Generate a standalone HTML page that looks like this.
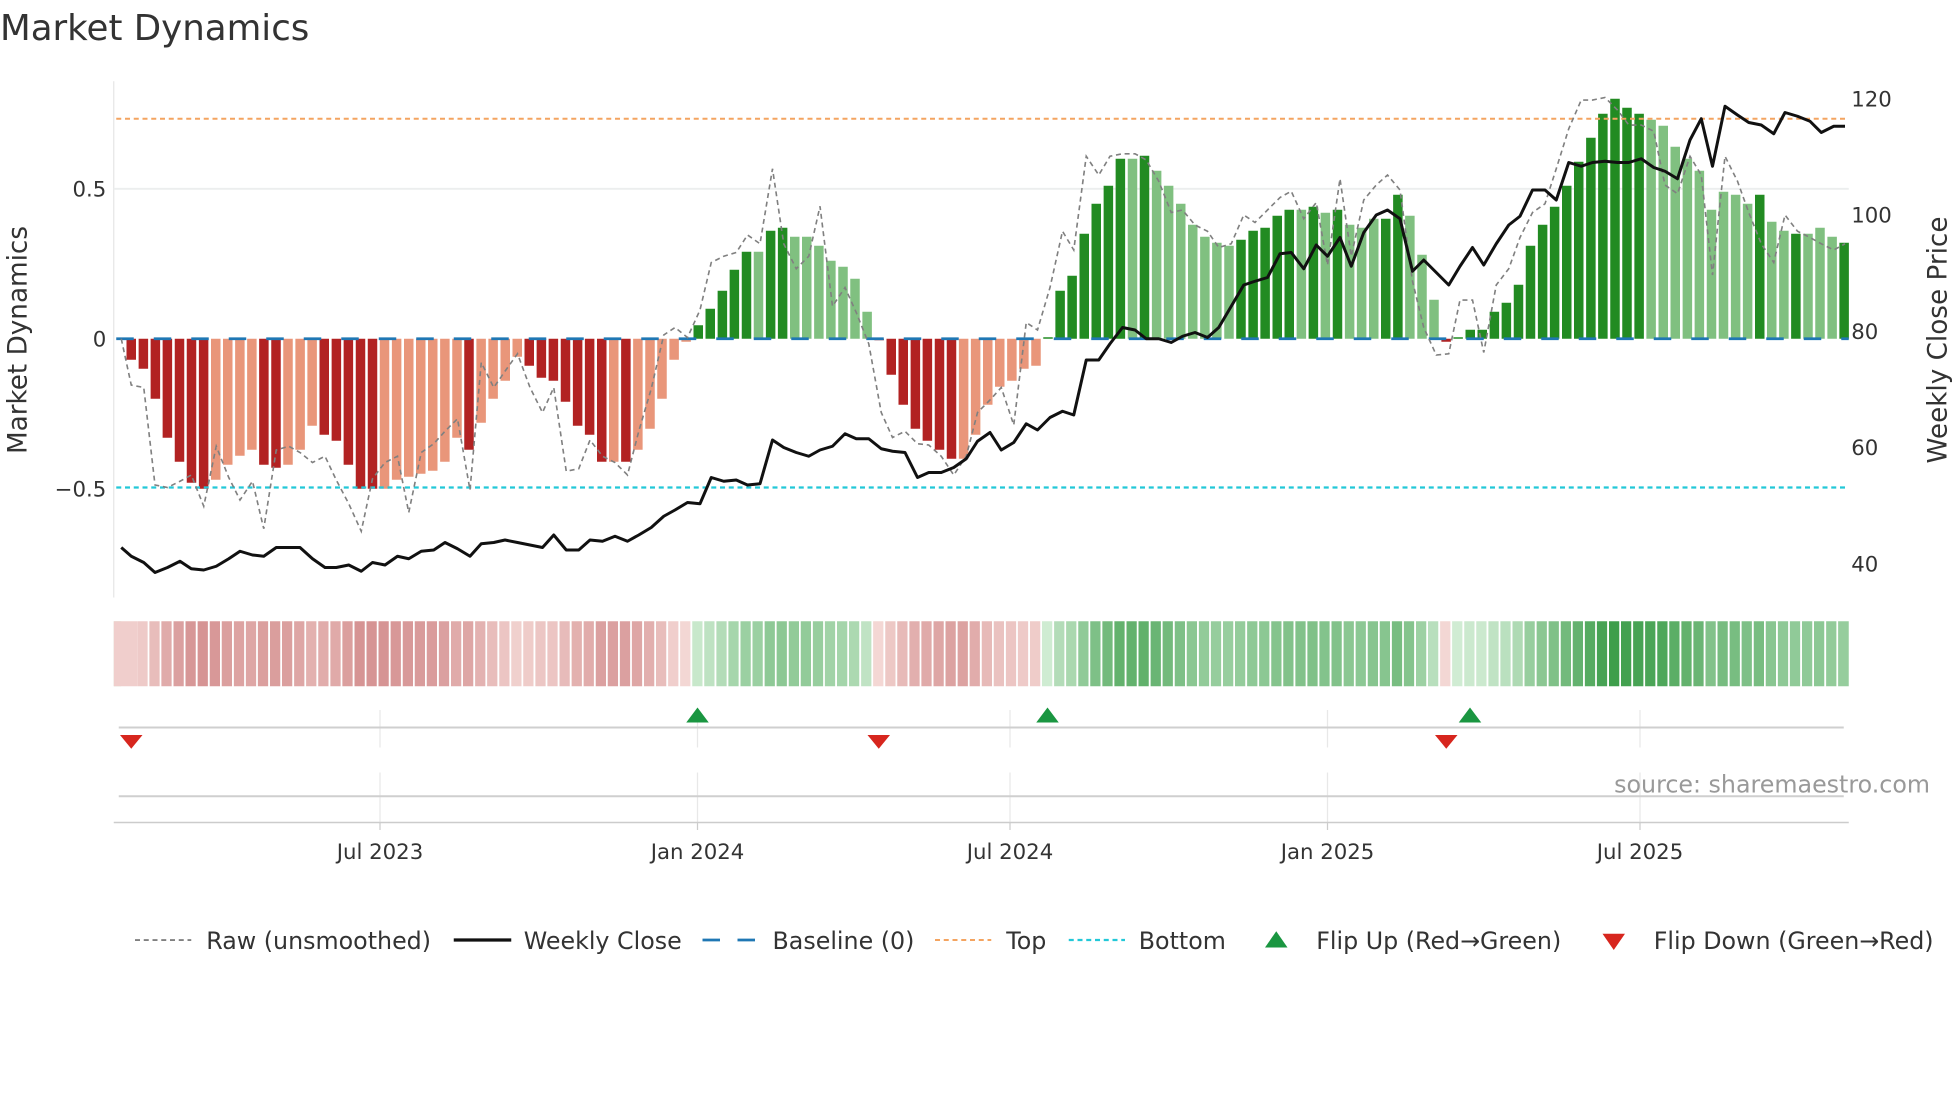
<!DOCTYPE html>
<html><head><meta charset="utf-8">
<style>
html,body{margin:0;padding:0;background:#fff;}
svg{display:block;font-family:"DejaVu Sans","Liberation Sans",sans-serif;}
</style></head>
<body>
<svg id="s" width="1960" height="1102" viewBox="0 0 1568 881.6" xmlns="http://www.w3.org/2000/svg">
<rect width="1568" height="882" fill="#fff"/>
<text x="0" y="32" font-size="28.5" fill="#333">Market Dynamics</text>
<line x1="91" y1="65" x2="91" y2="478" stroke="#e6e6e6" stroke-width="1"/>
<line x1="91" y1="151" x2="1479" y2="151" stroke="#eceeee" stroke-width="1.5"/>
<g font-size="17" fill="#333">
<text x="85" y="157" text-anchor="end">0.5</text>
<text x="85" y="277" text-anchor="end">0</text>
<text x="85" y="397" text-anchor="end">−0.5</text>
<text x="1481" y="85">120</text>
<text x="1481" y="178">100</text>
<text x="1481" y="271">80</text>
<text x="1481" y="364">60</text>
<text x="1481" y="457">40</text>
</g>
<text transform="translate(21,272) rotate(-90)" font-size="21" fill="#333" text-anchor="middle">Market Dynamics</text>
<text transform="translate(1557,272) rotate(-90)" font-size="21" fill="#333" text-anchor="middle">Weekly Close Price</text>
<g id="bars"></g>
<line x1="93" y1="271" x2="1479" y2="271" stroke="#1f77b4" stroke-width="2.2" stroke-dasharray="14,16"/>
<line x1="93" y1="95" x2="1479" y2="95" stroke="#f4a460" stroke-width="1.6" stroke-dasharray="4,3"/>
<line x1="93" y1="390" x2="1479" y2="390" stroke="#22c8d8" stroke-width="1.8" stroke-dasharray="4,3"/>
<polyline id="raw" fill="none" stroke="#808080" stroke-width="1.3" stroke-dasharray="4,3"/>
<polyline id="px" fill="none" stroke="#111" stroke-width="2.4" stroke-linejoin="round"/>
<g id="heat"></g>
<g stroke="#e8e8e8" stroke-width="1">
<line x1="304" y1="568" x2="304" y2="598"/><line x1="558" y1="568" x2="558" y2="598"/><line x1="808" y1="568" x2="808" y2="598"/><line x1="1062" y1="568" x2="1062" y2="598"/><line x1="1312" y1="568" x2="1312" y2="598"/>
<line x1="304" y1="618" x2="304" y2="658"/><line x1="558" y1="618" x2="558" y2="658"/><line x1="808" y1="618" x2="808" y2="658"/><line x1="1062" y1="618" x2="1062" y2="658"/><line x1="1312" y1="618" x2="1312" y2="658"/>
</g>
<line x1="95" y1="582" x2="1475" y2="582" stroke="#cfcfcf" stroke-width="1.6"/>
<line x1="95" y1="637" x2="1475" y2="637" stroke="#cfcfcf" stroke-width="1.6"/>
<line x1="91" y1="658" x2="1479" y2="658" stroke="#cccccc" stroke-width="1.2"/>
<g stroke="#ccc"><line x1="304" y1="658" x2="304" y2="664"/><line x1="558" y1="658" x2="558" y2="664"/><line x1="808" y1="658" x2="808" y2="664"/><line x1="1062" y1="658" x2="1062" y2="664"/><line x1="1312" y1="658" x2="1312" y2="664"/></g>
<g fill="#1a9641">
<polygon points="549,578 567,578 558,566"/><polygon points="829,578 847,578 838,566"/><polygon points="1167,578 1185,578 1176,566"/>
</g>
<g fill="#d7261e">
<polygon points="96,588 114,588 105,599"/><polygon points="694,588 712,588 703,599"/><polygon points="1148,588 1166,588 1157,599"/>
</g>
<text x="1544" y="634" font-size="19" fill="#999" text-anchor="end">source: sharemaestro.com</text>
<g font-size="17" fill="#333" text-anchor="middle">
<text x="304" y="687">Jul 2023</text><text x="558" y="687">Jan 2024</text><text x="808" y="687">Jul 2024</text><text x="1062" y="687">Jan 2025</text><text x="1312" y="687">Jul 2025</text>
</g>
<g font-size="19" fill="#333">
<line x1="108" y1="752" x2="153" y2="752" stroke="#808080" stroke-width="1.5" stroke-dasharray="4,3"/>
<text x="165" y="759">Raw (unsmoothed)</text>
<line x1="363" y1="752" x2="409" y2="752" stroke="#111" stroke-width="2.6"/>
<text x="419" y="759">Weekly Close</text>
<line x1="562" y1="752" x2="607" y2="752" stroke="#1f77b4" stroke-width="2.2" stroke-dasharray="14,14"/>
<text x="618" y="759">Baseline (0)</text>
<line x1="748" y1="752" x2="793" y2="752" stroke="#f4a460" stroke-width="1.6" stroke-dasharray="4,3"/>
<text x="805" y="759">Top</text>
<line x1="855" y1="752" x2="900" y2="752" stroke="#22c8d8" stroke-width="1.8" stroke-dasharray="4,3"/>
<text x="911" y="759">Bottom</text>
<polygon points="1012,758 1030,758 1021,745" fill="#1a9641"/>
<text x="1053" y="759">Flip Up (Red→Green)</text>
<polygon points="1282,747 1300,747 1291,760" fill="#d7261e"/>
<text x="1323" y="759">Flip Down (Green→Red)</text>
</g>
</svg>
<script>
var V=[-0.07,-0.10,-0.20,-0.33,-0.41,-0.48,-0.50,-0.47,-0.42,-0.39,-0.37,-0.42,-0.43,-0.42,-0.37,-0.29,-0.32,-0.34,-0.42,-0.50,-0.50,-0.50,-0.47,-0.46,-0.45,-0.44,-0.41,-0.33,-0.37,-0.28,-0.20,-0.14,-0.06,-0.09,-0.13,-0.14,-0.21,-0.29,-0.32,-0.41,-0.41,-0.41,-0.37,-0.30,-0.20,-0.07,-0.01,
0.045,0.10,0.16,0.23,0.29,0.29,0.36,0.37,0.34,0.34,0.31,0.26,0.24,0.20,0.09,-0.004,
-0.12,-0.22,-0.30,-0.34,-0.37,-0.40,-0.40,-0.32,-0.22,-0.16,-0.14,-0.10,-0.09,0.003,
0.16,0.21,0.35,0.45,0.51,0.60,0.60,0.61,0.56,0.51,0.45,0.38,0.34,0.32,0.31,0.33,0.36,0.37,0.41,0.43,0.43,0.44,0.42,0.43,0.38,0.37,0.40,0.40,0.48,0.41,0.28,0.13,-0.01,0.002,0.03,0.03,0.09,0.12,0.18,0.31,0.38,0.44,0.51,0.59,0.67,0.75,0.80,0.77,0.75,0.73,0.71,0.64,0.60,0.56,0.43,0.49,0.48,0.45,0.48,0.39,0.36,0.35,0.35,0.37,0.34,0.32];
var redPat="dddddddLLLLddLLLdddddLLLLLLLdLLLLddddddd"+"LdLLLLL";
var greenPat1="dddddLddLLLLLLL"+"d";
var redPat2="ddddddLLLLLLL"+"d";
var greenPat2="ddddddLdLLLLLLLddddd"+"LdLdLLLdd"+"LLL"+"dd"+"ddddddddddddddd"+"LLLLLLLL"+"LdLLdLLLddLL";
var pat=(redPat+greenPat1+redPat2+greenPat2);
var sx=function(i){return 105+i*9.65;};
var b="",h="";
function mix(a,c,t){t=Math.max(0,Math.min(1,t));var r=[];for(var k=0;k<3;k++)r.push(Math.round(a[k]+(c[k]-a[k])*t));return "rgb("+r.join(",")+")";}
for(var i=0;i<V.length;i++){
 var v=V[i],x=sx(i),w=7.6,y=271,hh=Math.abs(v)*240;
 var d=pat[i]!=="L";
 var col=v>=0?(d?"#228b22":"#80c080"):(d?"#b22222":"#e9967a");
 if(hh<1.2)hh=1.2;
 b+='<rect x="'+(x-w/2).toFixed(1)+'" y="'+(v>=0?y-hh:y).toFixed(1)+'" width="'+w+'" height="'+hh.toFixed(1)+'" fill="'+col+'"/>';
 var hc=v>=0?mix([208,236,211],[62,158,75],v/0.8):mix([244,216,213],[214,148,148],-v/0.5);
 var cx0=i===0?91:x-4.8, cw=i===0?(x+4.8-91):8.2;
 if(i===V.length-1)cw=1479-cx0;
 h+='<rect x="'+cx0.toFixed(1)+'" y="497" width="'+cw.toFixed(1)+'" height="52" fill="'+hc+'"/>';
}
h='<rect x="91" y="497" width="6" height="52" fill="#cfe9d2"/>'+h;
document.getElementById("bars").innerHTML=b;
document.getElementById("heat").innerHTML=h;
document.getElementById("px").setAttribute("points","97,438 105,445 115,450 124,458 134,454 144,449 153,455 163,456 173,453 183,447 192,441 202,444 211,445 221,438 231,438 240,438 250,447 260,454 269,454 279,452 289,457 298,450 308,452 318,445 327,447 337,441 347,440 356,434 366,439 376,445 385,435 395,434 404,432 414,434 424,436 434,438 443,428 453,440 463,440 472,432 482,433 492,429 502,433 511,428 521,422 531,413 540,408 550,402 560,403 569,382 579,385 589,384 598,388 608,387 618,352 627,358 637,362 647,365 656,360 666,357 676,347 685,351 695,351 705,359 714,361 724,362 734,382 743,378 753,378 763,374 773,367 782,353 792,346 801,360 811,354 821,339 830,344 840,334 850,329 859,332 869,288 879,288 888,275 898,262 908,264 917,271 927,271 937,274 946,269 956,266 966,270 975,262 985,245 995,228 1004,225 1014,222 1024,203 1033,202 1043,215 1053,196 1062,205 1072,190 1081,213 1091,186 1101,172 1110,168 1120,175 1130,217 1139,208 1149,218 1159,228 1168,213 1178,198 1187,212 1197,195 1207,180 1216,173 1226,152 1236,152 1245,160 1255,130 1265,133 1274,130 1284,129 1294,130 1303,130 1313,127 1323,134 1332,137 1342,143 1352,112 1361,95 1370,133 1380,85 1390,92 1399,98 1409,100 1419,107 1428,90 1438,93 1448,97 1457,106 1467,101 1476,101");
document.getElementById("raw").setAttribute("points","97,271 105,308 115,310 124,388 134,390 144,385 153,380 163,405 173,357 183,382 192,400 202,385 211,423 221,360 231,357 240,362 250,370 260,365 269,384 279,403 289,425 298,383 308,370 318,365 327,410 337,362 347,355 356,345 366,335 376,392 385,290 395,310 404,297 414,283 424,310 434,330 443,310 453,377 463,375 472,352 482,365 492,370 502,380 511,345 521,311 531,268 540,262 550,270 560,248 569,210 579,205 589,202 598,188 608,195 618,135 627,195 637,215 647,205 656,165 666,245 676,230 685,250 695,275 705,330 714,350 724,345 734,355 743,356 753,365 763,380 773,365 782,330 792,320 801,310 811,340 821,258 830,264 840,230 850,185 859,200 869,125 879,140 888,125 898,123 908,123 917,128 927,145 937,170 946,168 956,180 966,185 975,198 985,195 995,172 1004,178 1014,168 1024,158 1033,153 1043,175 1053,162 1062,212 1072,143 1081,205 1091,160 1101,148 1110,140 1120,152 1130,225 1139,262 1149,284 1159,283 1168,240 1178,240 1187,282 1197,228 1207,215 1216,190 1226,170 1236,163 1245,135 1255,103 1265,80 1274,80 1284,78 1294,88 1303,100 1313,100 1323,105 1332,148 1342,155 1352,125 1361,140 1370,220 1380,125 1390,145 1399,170 1409,195 1419,210 1428,172 1438,185 1448,190 1457,195 1467,200 1476,195");
</script>
</body></html>
